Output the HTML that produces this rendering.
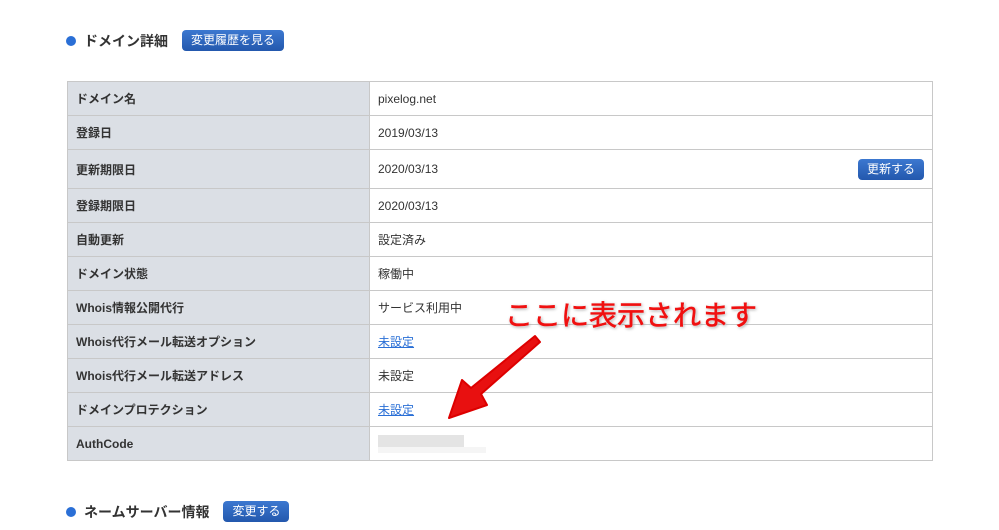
<!DOCTYPE html>
<html><head><meta charset="utf-8"><style>
body{margin:0;width:999px;height:530px;background:#fff;font-family:"Liberation Sans","Noto Sans CJK JP",sans-serif;position:relative;overflow:hidden;color:#333}
.h{position:absolute;left:66px;font-size:14px;font-weight:bold;display:flex;align-items:center;color:#333}
.dot{width:10px;height:10px;border-radius:50%;background:#2a6fd6;margin-right:8px}
.btn{display:inline-block;background:linear-gradient(#3c78d0,#2358ad);color:#fff;font-size:12px;font-weight:normal;border-radius:4px;padding:3px 9px;line-height:15px}
table{position:absolute;left:67px;top:81px;width:866px;border-collapse:collapse;font-size:12px}
td{border:1px solid #c8c8c8;height:33px;padding:0 0 0 8px;vertical-align:middle}
td.k{background:#dbdfe5;width:293px;font-weight:bold;color:#333}
a{color:#2a6fd6}
.t{position:absolute;left:505px;top:294px;font-size:28px;color:#f01010;-webkit-text-stroke:0.6px #f01010;text-shadow:0 0 2px #fff,1px 1px 3px #888;white-space:nowrap}
</style></head><body>
<div class="h" style="top:30px"><span class="dot"></span>ドメイン詳細<span class="btn" style="margin-left:14px">変更履歴を見る</span></div>
<table>
<tr><td class="k">ドメイン名</td><td>pixelog.net</td></tr>
<tr><td class="k">登録日</td><td>2019/03/13</td></tr>
<tr><td class="k" style="height:38px">更新期限日</td><td><div style="display:flex;justify-content:space-between;align-items:center">2020/03/13<span class="btn" style="margin-right:8px">更新する</span></div></td></tr>
<tr><td class="k">登録期限日</td><td>2020/03/13</td></tr>
<tr><td class="k">自動更新</td><td>設定済み</td></tr>
<tr><td class="k">ドメイン状態</td><td>稼働中</td></tr>
<tr><td class="k">Whois情報公開代行</td><td>サービス利用中</td></tr>
<tr><td class="k">Whois代行メール転送オプション</td><td><a href="#">未設定</a></td></tr>
<tr><td class="k">Whois代行メール転送アドレス</td><td>未設定</td></tr>
<tr><td class="k">ドメインプロテクション</td><td><a href="#">未設定</a></td></tr>
<tr><td class="k">AuthCode</td><td><div style="width:86px;height:12px;background:#e4e4e4"></div><div style="width:108px;height:6px;background:#f5f5f5"></div></td></tr>
</table>
<div class="t">ここに表示されます</div>
<svg style="position:absolute;left:0;top:0" width="999" height="530"><path d="M540 342 L481 394 L487 405 L449 418 L462 380 L471 388 L535 336 Z" fill="#e81010" stroke="#d00" stroke-width="2" stroke-linejoin="round"/></svg>
<div class="h" style="top:501px"><span class="dot"></span>ネームサーバー情報<span class="btn" style="margin-left:14px">変更する</span></div>
</body></html>
